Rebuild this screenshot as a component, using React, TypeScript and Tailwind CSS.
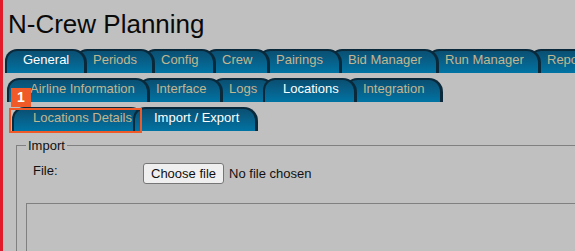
import React from "react";

type Tab = { label: string; w: string; z: string; active?: boolean; first?: boolean; pl?: string };

const row1: Tab[] = [
  { label: "General", w: "w-[82px]", z: "z-[9]", active: true, first: true },
  { label: "Periods", w: "w-[80px]", z: "z-[8]" },
  { label: "Config", w: "w-[73px]", z: "z-[7]" },
  { label: "Crew", w: "w-[66px]", z: "z-[6]" },
  { label: "Pairings", w: "w-[84px]", z: "z-[5]" },
  { label: "Bid Manager", w: "w-[109px]", z: "z-[4]" },
  { label: "Run Manager", w: "w-[114px]", z: "z-[3]" },
  { label: "Reports", w: "w-[100px]", z: "z-[2]" },
];

const row2: Tab[] = [
  { label: "Airline Information", w: "w-[143px]", z: "z-[9]", first: true, pl: "pl-[21px]" },
  { label: "Interface", w: "w-[85px]", z: "z-[8]" },
  { label: "Logs", w: "w-[64px]", z: "z-[7]" },
  { label: "Locations", w: "w-[94px]", z: "z-[20]", active: true, pl: "pl-[18px]" },
  { label: "Integration", w: "w-[98px]", z: "z-[5]" },
];

const row3: Tab[] = [
  { label: "Locations Details", w: "w-[133px]", z: "z-[9]", first: true, pl: "pl-[19px]" },
  { label: "Import / Export", w: "w-[125px]", z: "z-[20]", active: true, pl: "pl-[19px]" },
];

function TabItem({ t }: { t: Tab }) {
  return (
    <div
      className={`relative shrink-0 h-[24px] ${t.w} ${t.z} ${t.first ? "" : "-ml-[12px]"} ${
        t.pl ?? "pl-[16px]"
      } rounded-tl-[12px] rounded-tr-[14px] border-t-2 border-l-2 border-r-[3px] border-b-0 border-[#0a2a3c] bg-linear-to-b from-[#0a4f72] to-[#0074a4] text-[13px] leading-[18px] whitespace-nowrap overflow-hidden ${
        t.active ? "text-white" : "text-[#c3b68f]"
      }`}
    >
      {t.label}
    </div>
  );
}

function TabRow({ tabs, className }: { tabs: Tab[]; className: string }) {
  return (
    <div className={`flex ${className}`}>
      {tabs.map((t) => (
        <TabItem key={t.label} t={t} />
      ))}
    </div>
  );
}

export default function App() {
  return (
    <div
      className="relative min-h-[251px] h-[251px] overflow-hidden bg-[#c0c0c0] border-l-[3px] border-[#e11b2a] text-[#111]"
      style={{ fontFamily: '"Liberation Sans", Arial, sans-serif' }}
    >
      <h1 className="pt-[9px] pl-[5px] text-[26px] leading-[30px] font-normal text-[#0a0a0a]">N-Crew Planning</h1>

      <TabRow tabs={row1} className="mt-[10px] pl-[2px]" />
      <TabRow tabs={row2} className="mt-[5px] pl-[4px]" />
      <TabRow tabs={row3} className="mt-[5px] pl-[9px]" />

      <fieldset className="mt-[7px] ml-[13px] w-[600px] border border-[#808080] pl-[9px] pb-[10px]">
        <legend className="px-[2px] text-[13px] leading-[15px] text-[#111]">Import</legend>
        <div className="mt-[10px] flex items-start pl-[7px] text-[13px] leading-[15px]">
          <div className="w-[110px]">File:</div>
          <div className="flex items-center">
            <div className="h-[21px] px-[7px] flex items-center border border-[#767676] rounded-[3px] bg-[#efefef] text-[#111]">
              Choose file
            </div>
            <span className="ml-[5px] text-[#111]">No file chosen</span>
          </div>
        </div>
        <div className="mt-[19px] h-[80px] w-[580px] border border-[#808080]" />
      </fieldset>

      <div className="absolute left-[6px] top-[108px] w-[133px] h-[25px] border-2 border-[#f05a28] z-[30]" />
      <div className="absolute left-[8px] top-[88px] w-[20px] h-[19px] bg-[#f05a28] text-white text-[14px] font-bold leading-[19px] text-center z-[30]">
        1
      </div>
    </div>
  );
}
